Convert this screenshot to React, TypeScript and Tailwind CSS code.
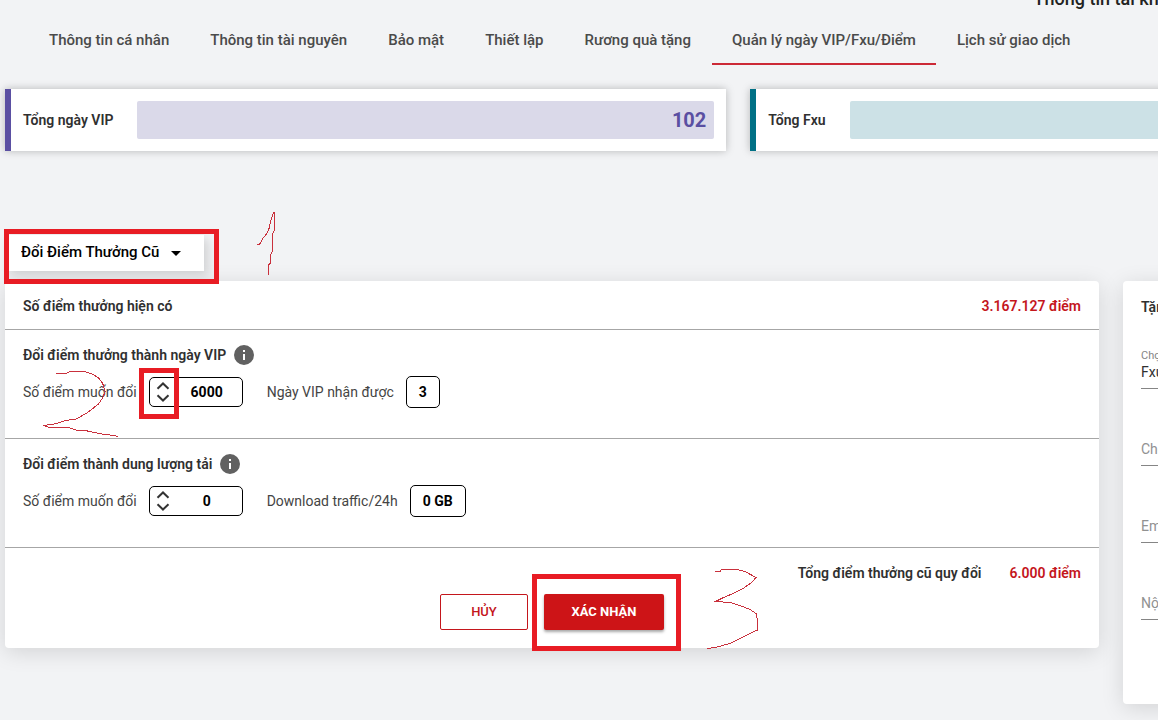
import React, { useState } from 'react';

const TABS = [
    'Thông tin cá nhân',
    'Thông tin tài nguyên',
    'Bảo mật',
    'Thiết lập',
    'Rương quà tặng',
    'Quản lý ngày VIP/Fxu/Điểm',
    'Lịch sử giao dịch',
];

const InfoIcon = () => (
    <svg viewBox="0 0 24 24" className="-m-0.5 size-6 shrink-0" fill="#616161" aria-hidden="true">
        <path d="M13 9h-2V7h2m0 10h-2v-6h2m-1-9A10 10 0 0 0 2 12a10 10 0 0 0 10 10 10 10 0 0 0 10-10A10 10 0 0 0 12 2z" />
    </svg>
);

const Chevron = ({ up = false }: { up?: boolean }) => (
    <svg viewBox="0 0 14 8" className="h-2 w-3.5" fill="none" stroke="#333" strokeWidth="2" aria-hidden="true">
        <path d={up ? 'M1.5 6.8 7 1.5l5.5 5.3' : 'M1.5 1.2 7 6.5l5.5-5.3'} />
    </svg>
);

// Red box drawn around a step of the guide
const Marker = ({ className }: { className: string }) => (
    <div className={`pointer-events-none absolute z-10 border-5 border-[#e81c24] ${className}`} />
);

interface TotalProps {
    label: string;
    value: string;
    edge: string;
    bar: string;
}

const Total = ({ label, value, edge, bar }: TotalProps) => (
    <div className={`flex items-center border-l-6 bg-white p-3 shadow-[0_0_8px_rgba(0,0,0,0.25)] ${edge}`}>
        <span className="mr-6 font-semibold">{label}</span>
        <div className={`flex h-[38px] flex-1 items-center justify-end rounded-xs px-2 text-xl font-bold ${bar}`}>
            {value}
        </div>
    </div>
);

interface ExchangeProps {
    id: string;
    title: string;
    resultLabel: string;
    initial: number;
    toResult: (points: number) => string;
    marked?: boolean;
}

const Exchange = ({ id, title, resultLabel, initial, toResult, marked }: ExchangeProps) => {
    const [points, setPoints] = useState(initial);

    return (
        <section className="border-b border-[#a6a6a6] px-4.5 pt-3.5 pb-7.5">
            <h3 className="flex h-5.5 items-center gap-2 font-semibold">
                {title}
                <InfoIcon />
            </h3>
            <div className="mt-2.5 flex h-8 items-center">
                <label htmlFor={id} className="mr-3 text-[#444]">
                    Số điểm muốn đổi
                </label>
                <div className="relative mr-6 flex h-[30px] w-[94px] items-center rounded-[5px] border border-black">
                    <div className="flex w-6.5 shrink-0 flex-col items-center gap-1">
                        <button type="button" aria-label="Tăng" onClick={() => setPoints(points + 2000)}>
                            <Chevron up />
                        </button>
                        <button type="button" aria-label="Giảm" onClick={() => setPoints(Math.max(0, points - 2000))}>
                            <Chevron />
                        </button>
                    </div>
                    <input
                        id={id}
                        value={points}
                        onChange={(e) => setPoints(Number(e.target.value) || 0)}
                        className="w-full min-w-0 bg-transparent pr-1 text-center font-bold text-black outline-none"
                    />
                    {marked && <Marker className="-top-2.5 -left-[11px] h-[51px] w-10" />}
                </div>
                <span className="mr-3 text-[#444]">{resultLabel}</span>
                <output
                    htmlFor={id}
                    className="flex h-8 items-center rounded-[5px] border border-black px-3 font-bold text-black"
                >
                    {toResult(points)}
                </output>
            </div>
        </section>
    );
};

const GiftField = ({ id, label }: { id: string; label: string }) => (
    <div className="flex h-[77px] items-end border-b border-[#858585] pb-1.5">
        <input id={id} aria-label={label} placeholder={label} className="w-full outline-none placeholder:text-[#919191]" />
    </div>
);

// Hand-drawn step numbers 1, 2, 3
const StepStrokes = () => (
    <svg
        className="pointer-events-none absolute top-0 left-0 z-10"
        width="1158"
        height="720"
        fill="none"
        stroke="#c9303c"
        strokeWidth="1"
        shapeRendering="crispEdges"
        aria-hidden="true"
    >
        <path d="M257 244.5h2.5l3-5.5 4-5 2.2-4 1.8-8.5 3-9h1v17.5l-2 4-.5 18.5-1.5 2v8.5l-2 2v10" />
        <path d="M56 373.5h10.5l3.5-2h15l8.5 3 5 3.5 4 5 2.8 8.5-2.8 6.5-4 6-11.5 9-11 6-11 1.5-8 3-13 2 5 2h20l6.5 2.5 12 1 14.5 3 12 1.500 4 1" />
        <path d="M715 571.5h5l1.5-2h15l8.5 2 11 6-4.5 5-8.5 6-10 5-9.5 4-8 4 14.500 1 10 3 10 4 6 4 1.500 6.500v10l-7.500 3.500-10 5-10 5-15 4-7.500 1" />
    </svg>
);

export default function App() {
    const [mode, setMode] = useState('Đổi Điểm Thưởng Cũ');

    return (
        <div className="relative min-h-screen overflow-hidden bg-[#f2f3f5] font-[Roboto,'Noto_Sans',sans-serif] text-sm text-[#303030]">
            <div className="w-[calc(127%+1px)] pl-[5px]">
                <header className="-mt-4.5 flex h-[34px] items-center justify-end pr-[283px]">
                    <h1 className="text-lg font-medium text-[#222]">Thông tin tài khoản</h1>
                </header>

                <nav className="flex gap-px pl-6">
                    {TABS.map((tab) => (
                        <a
                            key={tab}
                            href="#"
                            aria-current={tab === TABS[5] ? 'page' : undefined}
                            className="flex h-[49px] items-center border-b-2 border-transparent px-5 pt-0.5 text-[15px] font-medium whitespace-nowrap text-[#4a4a4a] aria-[current=page]:border-[#cc2936]"
                        >
                            {tab}
                        </a>
                    ))}
                </nav>

                <div className="mt-6 grid grid-cols-2 gap-6">
                    <Total label="Tổng ngày VIP" value="102" edge="border-[#5a4fa2]" bar="bg-[#dad9e9] text-[#5a4fa2]" />
                    <Total label="Tổng Fxu" value="0" edge="border-[#007085]" bar="bg-[#cce1e6] text-[#007085]" />
                </div>

                <div className="relative mt-21 mb-2.5 w-fit">
                    <select
                        value={mode}
                        aria-label="Loại đổi điểm"
                        onChange={(e) => setMode(e.target.value)}
                        className="h-9 w-[199px] appearance-none bg-white px-4 text-[15px] font-medium text-black shadow-[4px_4px_10px_rgba(0,0,0,0.14)] outline-none"
                    >
                        <option>Đổi Điểm Thưởng Cũ</option>
                    </select>
                    <svg viewBox="0 0 10 5" className="pointer-events-none absolute top-4 right-[23px] h-[5px] w-2.5" aria-hidden="true">
                        <path d="M0 0h10L5 5z" />
                    </svg>
                    <Marker className="-top-1.5 -left-px h-[55px] w-[215px]" />
                </div>

                <main className="grid grid-cols-4 items-start gap-6">
                    <form
                        onSubmit={(e) => e.preventDefault()}
                        className="col-span-3 rounded-sm bg-white shadow-[0_4px_22px_rgba(0,0,0,0.13)]"
                    >
                        <div className="flex h-[49px] items-center justify-between border-b border-[#a6a6a6] px-4.5 pt-0.5 font-semibold">
                            <h2>Số điểm thưởng hiện có</h2>
                            <span className="text-[#c4161c]">3.167.127 điểm</span>
                        </div>
                        <Exchange
                            id="vip-points"
                            title="Đổi điểm thưởng thành ngày VIP"
                            resultLabel="Ngày VIP nhận được"
                            initial={6000}
                            toResult={(p) => String(Math.floor(p / 2000))}
                            marked
                        />
                        <Exchange
                            id="traffic-points"
                            title="Đổi điểm thành dung lượng tải"
                            resultLabel="Download traffic/24h"
                            initial={0}
                            toResult={(p) => `${Math.floor(p / 2000)} GB`}
                        />
                        <footer className="px-4.5 pt-3.5 pb-4.5">
                            <div className="flex h-5.5 items-center justify-end gap-7 font-semibold">
                                <span>Tổng điểm thưởng cũ quy đổi</span>
                                <span className="text-[#c4161c]">6.000 điểm</span>
                            </div>
                            <div className="mt-2.5 flex justify-center gap-4">
                                <button
                                    type="button"
                                    className="h-9 w-22 rounded-xs border border-[#c4161c] text-[13px] font-medium text-[#c4161c]"
                                >
                                    HỦY
                                </button>
                                <div className="relative">
                                    <button
                                        type="submit"
                                        className="h-9 w-30 rounded-xs bg-[#cd1417] text-[13px] font-bold text-white shadow-[0_2px_3px_rgba(0,0,0,0.35)]"
                                    >
                                        XÁC NHẬN
                                    </button>
                                    <Marker className="-top-5 -left-3 h-[77px] w-[149px]" />
                                </div>
                            </div>
                        </footer>
                    </form>

                    <aside className="rounded-sm bg-white px-4.5 pb-21 shadow-[0_4px_22px_rgba(0,0,0,0.13)]">
                        <h2 className="flex h-[49px] items-center pt-0.5 font-semibold">Tặng</h2>
                        <div className="flex h-[59px] flex-col justify-end border-b border-[#858585] pb-1.5">
                            <label htmlFor="gift-type" className="text-[11px] leading-3 text-[#858585]">
                                Chọn
                            </label>
                            <input id="gift-type" defaultValue="Fxu" className="h-5 w-full outline-none" />
                        </div>
                        <GiftField id="gift-amount" label="Chọn" />
                        <GiftField id="gift-email" label="Email" />
                        <GiftField id="gift-note" label="Nội dung" />
                    </aside>
                </main>
            </div>
            <StepStrokes />
        </div>
    );
}
